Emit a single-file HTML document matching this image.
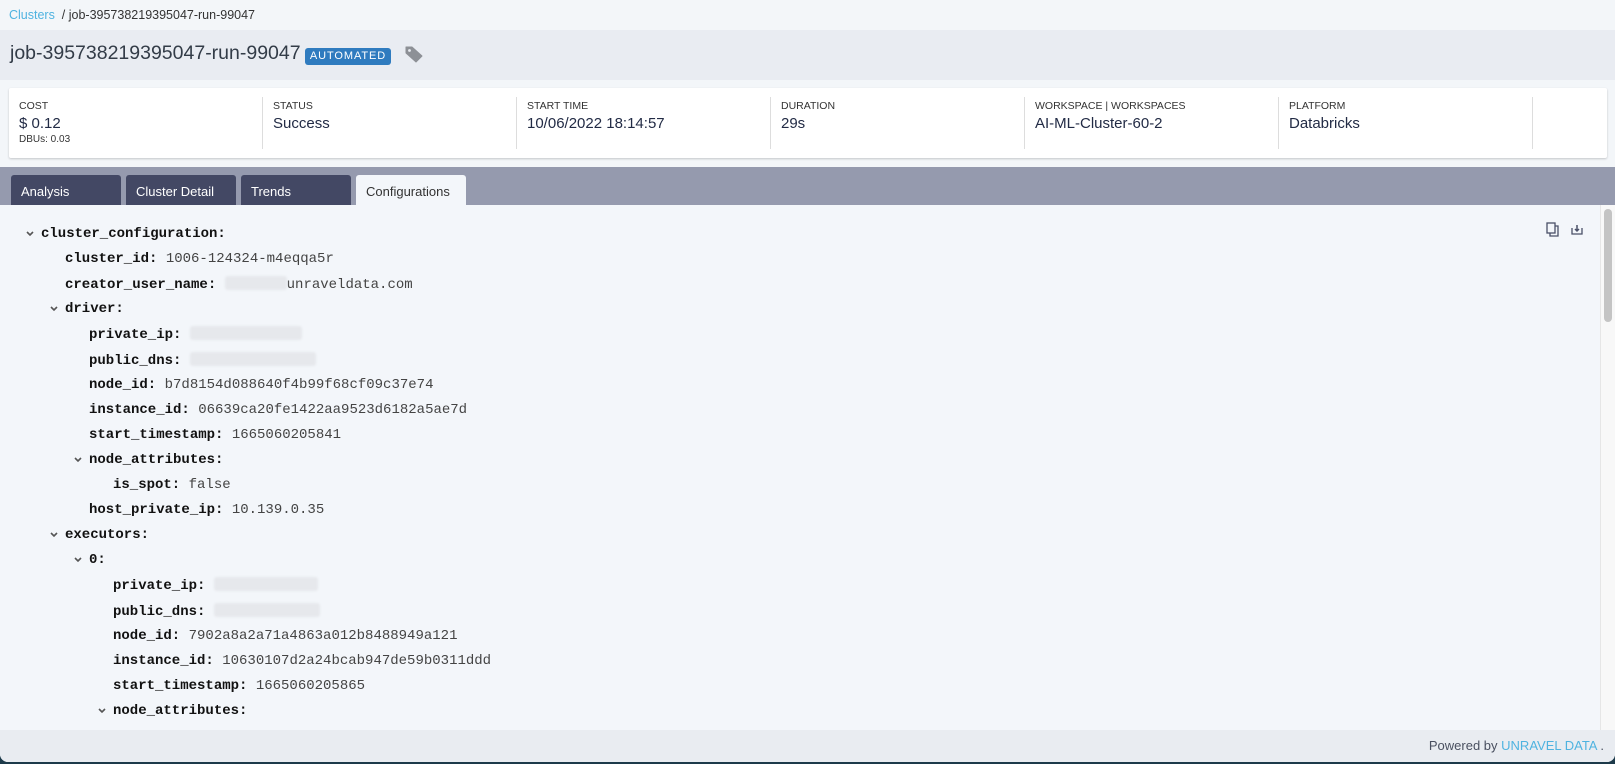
<!DOCTYPE html>
<html><head><meta charset="utf-8"><style>
*{margin:0;padding:0;box-sizing:border-box}
body{width:1615px;height:764px;background:#1d3a4a;font-family:"Liberation Sans",sans-serif;position:relative;overflow:hidden}
.win{position:absolute;left:0;top:0;width:1615px;height:762px;background:#f3f6f9;border-radius:0 0 8px 8px;overflow:hidden}
.bc{position:absolute;left:9px;top:8px;font-size:12.5px;color:#333}
.bc a{color:#4fb3e0;text-decoration:none}
.hdr{position:absolute;left:0;top:30px;width:1615px;height:50px;background:#e9ecf2}
.title{position:absolute;left:10px;top:12px;font-size:19.5px;color:#333c48}
.badge{position:absolute;left:305px;top:18px;width:86px;height:17px;background:#2f7bbf;color:#fff;font-size:11px;letter-spacing:.9px;border-radius:3px;text-align:center;line-height:17px}
.card{position:absolute;left:9px;top:88px;width:1598px;height:70px;background:#fff;box-shadow:0 1px 2px rgba(0,0,0,.2);border-radius:2px}
.col{position:absolute;top:9px;height:52px;width:254px;padding-left:10px;border-right:1px solid #ddd}
.lb{font-size:10.5px;color:#333;margin-top:3px}
.vl{font-size:15px;color:#222b45;margin-top:3px}
.sm{font-size:10px;color:#333;margin-top:2px}
.tabbar{position:absolute;left:0;top:167px;width:1615px;height:38px;background:#959aae}
.tab{position:absolute;top:8px;height:30px;width:110px;background:#434864;color:#fff;font-size:13px;padding:9px 0 0 10px;border-radius:3px 3px 0 0}
.tab.act{background:#f3f6fa;color:#333}
.content{position:absolute;left:0;top:205px;width:1600px;height:525px;background:#f3f6fa;font-family:"Liberation Mono",monospace;font-size:14px;color:#444}
.ln{position:absolute;white-space:pre;line-height:16px}
.ln b{color:#111;font-weight:bold}
.ar{position:absolute}
.blur{display:inline-block;height:14px;vertical-align:-2px;background:#e6e8ec;border-radius:3px;filter:blur(1px)}
.sb{position:absolute;left:1600px;top:205px;width:15px;height:525px;background:#f8f8f8;border-left:1px solid #e6e6e6}
.th{position:absolute;left:3px;top:4px;width:8px;height:113px;background:#c4c4c4;border-radius:4px}
.foot{position:absolute;left:0;top:730px;width:1615px;height:32px;background:#e9ecf1;font-size:13px;color:#4a5060}
.foot span{position:absolute;right:11px;top:8px}
.foot i{font-style:normal;color:#4fb3e0}
</style></head><body><div class="win">
<div class="bc"><a>Clusters</a>&nbsp; / job-395738219395047-run-99047</div>
<div class="hdr"><div class="title">job-395738219395047-run-99047</div><div class="badge">AUTOMATED</div>
<svg style="position:absolute;left:405px;top:16px" width="19" height="17" viewBox="0 0 19 17"><path d="M1 1h6l10 9-6 6L1 7z" fill="#8d9096" stroke="#8d9096" stroke-linejoin="round"/><circle cx="4.5" cy="4.5" r="1.4" fill="#e9ecf2"/></svg></div>
<div class="card">
<div class="col" style="left:0"><div class="lb">COST</div><div class="vl">$ 0.12</div><div class="sm">DBUs: 0.03</div></div>
<div class="col" style="left:254px"><div class="lb">STATUS</div><div class="vl">Success</div></div>
<div class="col" style="left:508px"><div class="lb">START TIME</div><div class="vl">10/06/2022 18:14:57</div></div>
<div class="col" style="left:762px"><div class="lb">DURATION</div><div class="vl">29s</div></div>
<div class="col" style="left:1016px"><div class="lb">WORKSPACE | WORKSPACES</div><div class="vl">AI-ML-Cluster-60-2</div></div>
<div class="col" style="left:1270px"><div class="lb">PLATFORM</div><div class="vl">Databricks</div></div>
</div>
<div class="tabbar">
<div class="tab" style="left:11px">Analysis</div>
<div class="tab" style="left:126px">Cluster Detail</div>
<div class="tab" style="left:241px">Trends</div>
<div class="tab act" style="left:356px">Configurations</div>
</div>
<div class="content">
<svg style="position:absolute;left:1546px;top:17px" width="13" height="15" viewBox="0 0 13 15"><rect x="1" y="1" width="8" height="10" fill="none" stroke="#4a5068" stroke-width="1.3"/><path d="M4 11v3h8V4H9" fill="none" stroke="#4a5068" stroke-width="1.3"/></svg>
<svg style="position:absolute;left:1571px;top:19px" width="12" height="11" viewBox="0 0 12 11"><path d="M1 4v6h10V4" fill="none" stroke="#4a5068" stroke-width="1.3"/><path d="M6 1v6M4 5l2 2 2-2" stroke="#4a5068" stroke-width="1.5" fill="none"/></svg>
<svg class="ar" style="left:26px;top:26px" width="8" height="6" viewBox="0 0 8 6"><path d="M1 1l3 3 3-3" stroke="#555" stroke-width="1.6" fill="none"/></svg>
<div class="ln" style="left:41px;top:21px"><b>cluster_configuration:</b></div>
<div class="ln" style="left:65px;top:46px"><b>cluster_id:</b> 1006-124324-m4eqqa5r</div>
<div class="ln" style="left:65px;top:71px"><b>creator_user_name:</b> <span class="blur" style="width:62px"></span>unraveldata.com</div>
<svg class="ar" style="left:50px;top:101px" width="8" height="6" viewBox="0 0 8 6"><path d="M1 1l3 3 3-3" stroke="#555" stroke-width="1.6" fill="none"/></svg>
<div class="ln" style="left:65px;top:96px"><b>driver:</b></div>
<div class="ln" style="left:89px;top:121px"><b>private_ip:</b> <span class="blur" style="width:112px"></span></div>
<div class="ln" style="left:89px;top:147px"><b>public_dns:</b> <span class="blur" style="width:126px"></span></div>
<div class="ln" style="left:89px;top:172px"><b>node_id:</b> b7d8154d088640f4b99f68cf09c37e74</div>
<div class="ln" style="left:89px;top:197px"><b>instance_id:</b> 06639ca20fe1422aa9523d6182a5ae7d</div>
<div class="ln" style="left:89px;top:222px"><b>start_timestamp:</b> 1665060205841</div>
<svg class="ar" style="left:74px;top:252px" width="8" height="6" viewBox="0 0 8 6"><path d="M1 1l3 3 3-3" stroke="#555" stroke-width="1.6" fill="none"/></svg>
<div class="ln" style="left:89px;top:247px"><b>node_attributes:</b></div>
<div class="ln" style="left:113px;top:272px"><b>is_spot:</b> false</div>
<div class="ln" style="left:89px;top:297px"><b>host_private_ip:</b> 10.139.0.35</div>
<svg class="ar" style="left:50px;top:327px" width="8" height="6" viewBox="0 0 8 6"><path d="M1 1l3 3 3-3" stroke="#555" stroke-width="1.6" fill="none"/></svg>
<div class="ln" style="left:65px;top:322px"><b>executors:</b></div>
<svg class="ar" style="left:74px;top:352px" width="8" height="6" viewBox="0 0 8 6"><path d="M1 1l3 3 3-3" stroke="#555" stroke-width="1.6" fill="none"/></svg>
<div class="ln" style="left:89px;top:347px"><b>0:</b></div>
<div class="ln" style="left:113px;top:372px"><b>private_ip:</b> <span class="blur" style="width:104px"></span></div>
<div class="ln" style="left:113px;top:398px"><b>public_dns:</b> <span class="blur" style="width:106px"></span></div>
<div class="ln" style="left:113px;top:423px"><b>node_id:</b> 7902a8a2a71a4863a012b8488949a121</div>
<div class="ln" style="left:113px;top:448px"><b>instance_id:</b> 10630107d2a24bcab947de59b0311ddd</div>
<div class="ln" style="left:113px;top:473px"><b>start_timestamp:</b> 1665060205865</div>
<svg class="ar" style="left:98px;top:503px" width="8" height="6" viewBox="0 0 8 6"><path d="M1 1l3 3 3-3" stroke="#555" stroke-width="1.6" fill="none"/></svg>
<div class="ln" style="left:113px;top:498px"><b>node_attributes:</b></div>
</div>
<div class="sb"><div class="th"></div></div>
<div class="foot"><span>Powered by <i>UNRAVEL DATA</i> .</span></div>
</div></body></html>
